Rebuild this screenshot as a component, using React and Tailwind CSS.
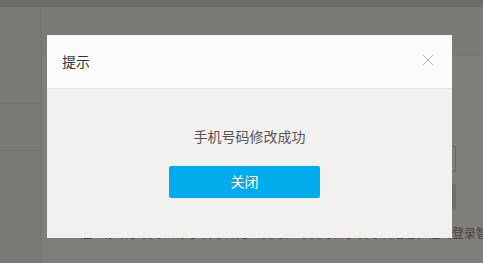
import { X } from "lucide-react";

const font = { fontFamily: '"Liberation Sans", "Noto Sans CJK SC", sans-serif' };

export default function App() {
  return (
    <div className="relative w-[483px] h-[263px] overflow-hidden bg-[#7b7a76]" style={font}>
      {/* Page behind the mask */}
      <div className="h-[7px] bg-[#6d6c68]" />
      <div className="flex h-[256px]">
        {/* Left menu */}
        <div className="w-[40px] shrink-0 flex flex-col">
          <div className="h-[96px]" />
          <div className="h-[48px] border-t border-b border-[#73726e]" />
        </div>
        <div className="w-[2px] shrink-0 bg-[#777672]" />
        {/* Main panel */}
        <div className="flex-1 min-w-0 flex flex-col bg-[#807e7a]">
          <div className="h-[48px] bg-[#7b7a76] border-b border-[#74736f]" />
          <div className="flex flex-col items-end pr-[27px]">
            <div className="mt-[91px] w-[120px] h-[26px] border border-[#686764] rounded-[1px]" />
            <div className="mt-[12px] w-[120px] h-[26px] bg-[#6f6e6a] rounded-[2px]" />
          </div>
          <div className="mt-[17px] flex justify-end">
            <p className="shrink-0 text-[12px] leading-[14px] text-[#464543] whitespace-nowrap -mr-[5px]">
              注：修改手机号后原手机号将无法使用，可使用新手机号及短信验证码登录智
            </p>
          </div>
        </div>
      </div>

      {/* Dialog */}
      <div className="absolute left-[47px] top-[35px] w-[405px] h-[203px] flex flex-col bg-[#f2f1f0]">
        <div className="h-[54px] flex items-center justify-between pl-[15px] pr-[14px] bg-[#fbfbfb] border-b border-[#e2e1e0]">
          <span className="text-[14px] text-[#333] mt-[2px]">提示</span>
          <X className="w-[20px] h-[20px] text-[#a8a8a8] -mt-[4px]" strokeWidth={1.1} />
        </div>
        <div className="flex flex-col items-center">
          <p className="mt-[38px] text-[14px] leading-[20px] text-[#555]">手机号码修改成功</p>
          <button className="mt-[19px] -ml-[10px] w-[151px] h-[32px] rounded-[2px] bg-[#00acec] text-white text-[14px]">
            关闭
          </button>
        </div>
      </div>
    </div>
  );
}
